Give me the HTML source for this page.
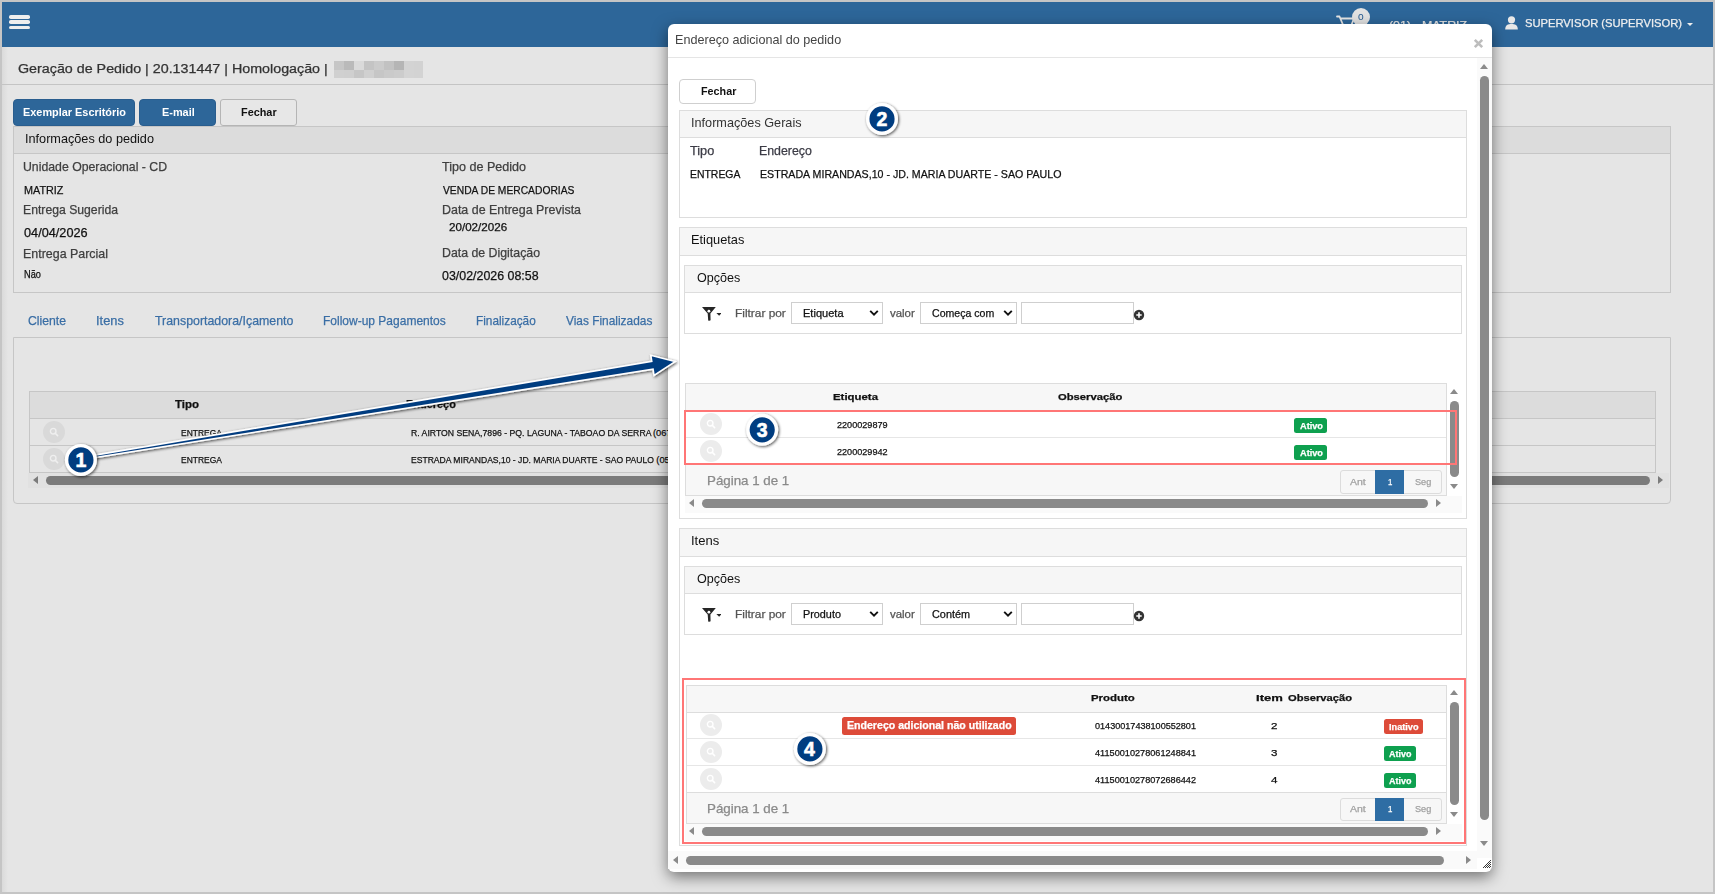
<!DOCTYPE html>
<html><head><meta charset="utf-8"><style>
html,body{margin:0;padding:0;width:1715px;height:894px;overflow:hidden;position:relative;font-family:"Liberation Sans", sans-serif;background:#e5e5e5}
</style></head><body>
<div style="position:absolute;left:0px;top:0px;width:1715px;height:894px;background:#c5c5c5"></div>
<div style="position:absolute;left:2px;top:2px;width:1711px;height:889.5px;background:#e5e5e5"></div>
<div style="position:absolute;left:2px;top:47px;width:6px;height:845px;background:linear-gradient(90deg,#dadada,#e5e5e5)"></div>
<div style="position:absolute;left:2px;top:2px;width:1711px;height:45px;background:#2d6699"></div>
<div style="position:absolute;left:9px;top:15px;width:21px;height:3.5px;background:#eee;border-radius:1.75px"></div>
<div style="position:absolute;left:9px;top:20.2px;width:21px;height:3.5px;background:#eee;border-radius:1.75px"></div>
<div style="position:absolute;left:9px;top:25.5px;width:21px;height:3.5px;background:#eee;border-radius:1.75px"></div>
<svg style="position:absolute;left:1330px;top:8px" width="30" height="20" viewBox="0 0 30 20"><path d="M7 8.5 H9.5 L13.5 18 H21 L24 10.5 H10.5" fill="none" stroke="#e6e6e6" stroke-width="1.8" stroke-linejoin="round" stroke-linecap="round"/></svg>
<div style="position:absolute;left:1352px;top:8px;width:18px;height:18px;background:#e2e2e2;border-radius:50%"></div>
<div id="t0" style="position:absolute;left:1358.4px;top:11px;font-size:9.6px;line-height:normal;font-weight:400;color:#23598f;white-space:pre;transform:scaleX(1.0590);transform-origin:0 0;">0</div>
<div id="t1" style="position:absolute;left:1389px;top:19px;font-size:11.3px;line-height:normal;font-weight:400;color:#e6e6e6;white-space:pre;transform:scaleX(1.0946);transform-origin:0 0;-webkit-text-stroke:0.25px currentColor;">(01) - MATRIZ</div>
<svg style="position:absolute;left:1504px;top:15px" width="16" height="16" viewBox="0 0 16 16"><circle cx="7.5" cy="4.8" r="3.6" fill="#e8e8e8"/><path d="M1.2 14.5 C1.2 10 4 9 7.5 9 C11 9 13.8 10 13.8 14.5 Z" fill="#e8e8e8"/></svg>
<div id="t2" style="position:absolute;left:1525.1px;top:17px;font-size:11.2px;line-height:normal;font-weight:400;color:#eeeeee;white-space:pre;transform:scaleX(1.0008);transform-origin:0 0;-webkit-text-stroke:0.25px currentColor;">SUPERVISOR (SUPERVISOR)</div>
<div style="position:absolute;left:1687px;top:23px;width:0;height:0;border-left:3px solid transparent;border-right:3px solid transparent;border-top:3px solid #eee"></div>
<div id="t3" style="position:absolute;left:18px;top:62px;font-size:12.5px;line-height:normal;font-weight:400;color:#333;white-space:pre;transform:scaleX(1.1428);transform-origin:0 0;-webkit-text-stroke:0.25px currentColor;">Geração de Pedido | 20.131447 | Homologação |</div>
<div style="position:absolute;left:334px;top:61px;width:10px;height:9px;background:#c6c6c6"></div>
<div style="position:absolute;left:344px;top:61px;width:10px;height:9px;background:#bababa"></div>
<div style="position:absolute;left:354px;top:61px;width:10px;height:9px;background:#dadada"></div>
<div style="position:absolute;left:364px;top:61px;width:10px;height:9px;background:#c4c4c4"></div>
<div style="position:absolute;left:374px;top:61px;width:10px;height:9px;background:#cbcbcb"></div>
<div style="position:absolute;left:384px;top:61px;width:10px;height:9px;background:#c2c2c2"></div>
<div style="position:absolute;left:394px;top:61px;width:10px;height:9px;background:#b5b5b5"></div>
<div style="position:absolute;left:404px;top:61px;width:10px;height:9px;background:#d3d3d3"></div>
<div style="position:absolute;left:414px;top:61px;width:9px;height:9px;background:#d2d2d2"></div>
<div style="position:absolute;left:334px;top:70px;width:10px;height:8px;background:#d0d0d0"></div>
<div style="position:absolute;left:344px;top:70px;width:10px;height:8px;background:#cfcfcf"></div>
<div style="position:absolute;left:354px;top:70px;width:10px;height:8px;background:#c6c6c6"></div>
<div style="position:absolute;left:364px;top:70px;width:10px;height:8px;background:#d0d0d0"></div>
<div style="position:absolute;left:374px;top:70px;width:10px;height:8px;background:#c6c6c6"></div>
<div style="position:absolute;left:384px;top:70px;width:10px;height:8px;background:#cacaca"></div>
<div style="position:absolute;left:394px;top:70px;width:10px;height:8px;background:#cccccc"></div>
<div style="position:absolute;left:404px;top:70px;width:10px;height:8px;background:#d4d4d4"></div>
<div style="position:absolute;left:414px;top:70px;width:9px;height:8px;background:#d3d3d3"></div>
<div style="position:absolute;left:2px;top:84px;width:1711px;height:1px;background:#c4c4c4"></div>
<div style="position:absolute;left:13px;top:99px;width:122px;height:27px;background:#2d6699;border:1px solid #295d8e;box-sizing:border-box;border-radius:4px"></div>
<div id="t4" style="position:absolute;left:23.3px;top:106px;font-size:11.5px;line-height:normal;font-weight:700;color:#fff;white-space:pre;transform:scaleX(0.9475);transform-origin:0 0;">Exemplar Escritório</div>
<div style="position:absolute;left:139px;top:99px;width:77px;height:27px;background:#2d6699;border:1px solid #295d8e;box-sizing:border-box;border-radius:4px"></div>
<div id="t5" style="position:absolute;left:161.7px;top:106px;font-size:11.5px;line-height:normal;font-weight:700;color:#fff;white-space:pre;transform:scaleX(0.9488);transform-origin:0 0;">E-mail</div>
<div style="position:absolute;left:220px;top:99px;width:77px;height:27px;background:#e7e7e7;border:1px solid #b5b5b5;border-radius:3px;box-sizing:border-box"></div>
<div id="t6" style="position:absolute;left:241px;top:106px;font-size:11.5px;line-height:normal;font-weight:700;color:#111;white-space:pre;transform:scaleX(0.9450);transform-origin:0 0;">Fechar</div>
<div style="position:absolute;left:13px;top:126px;width:1658px;height:167px;border:1px solid #c6c6c6;box-sizing:border-box"></div>
<div style="position:absolute;left:14px;top:127px;width:1656px;height:26px;background:#dcdcdc;border-bottom:1px solid #c6c6c6"></div>
<div id="t7" style="position:absolute;left:25px;top:131px;font-size:13px;line-height:normal;font-weight:400;color:#111;white-space:pre;transform:scaleX(0.9751);transform-origin:0 0;">Informações do pedido</div>
<div id="t8" style="position:absolute;left:23px;top:160px;font-size:12.2px;line-height:normal;font-weight:400;color:#3f3f3f;white-space:pre;transform:scaleX(1.0075);transform-origin:0 0;-webkit-text-stroke:0.25px currentColor;">Unidade Operacional - CD</div>
<div id="t9" style="position:absolute;left:23.7px;top:183px;font-size:11.7px;line-height:normal;font-weight:400;color:#111;white-space:pre;transform:scaleX(0.9246);transform-origin:0 0;-webkit-text-stroke:0.25px currentColor;">MATRIZ</div>
<div id="t10" style="position:absolute;left:23px;top:203px;font-size:12.2px;line-height:normal;font-weight:400;color:#3f3f3f;white-space:pre;transform:scaleX(1.0015);transform-origin:0 0;-webkit-text-stroke:0.25px currentColor;">Entrega Sugerida</div>
<div id="t11" style="position:absolute;left:24px;top:226px;font-size:12.5px;line-height:normal;font-weight:400;color:#111;white-space:pre;transform:scaleX(1.0169);transform-origin:0 0;-webkit-text-stroke:0.25px currentColor;">04/04/2026</div>
<div id="t12" style="position:absolute;left:23px;top:247px;font-size:12.2px;line-height:normal;font-weight:400;color:#3f3f3f;white-space:pre;transform:scaleX(1.0203);transform-origin:0 0;-webkit-text-stroke:0.25px currentColor;">Entrega Parcial</div>
<div id="t13" style="position:absolute;left:24px;top:269px;font-size:10.3px;line-height:normal;font-weight:400;color:#111;white-space:pre;transform:scaleX(0.8943);transform-origin:0 0;-webkit-text-stroke:0.25px currentColor;">Não</div>
<div id="t14" style="position:absolute;left:441.8px;top:160px;font-size:12.2px;line-height:normal;font-weight:400;color:#3f3f3f;white-space:pre;transform:scaleX(1.0305);transform-origin:0 0;-webkit-text-stroke:0.25px currentColor;">Tipo de Pedido</div>
<div id="t15" style="position:absolute;left:442.6px;top:183px;font-size:11.7px;line-height:normal;font-weight:400;color:#111;white-space:pre;transform:scaleX(0.8795);transform-origin:0 0;-webkit-text-stroke:0.25px currentColor;">VENDA DE MERCADORIAS</div>
<div id="t16" style="position:absolute;left:441.8px;top:203px;font-size:12.2px;line-height:normal;font-weight:400;color:#3f3f3f;white-space:pre;transform:scaleX(1.0209);transform-origin:0 0;-webkit-text-stroke:0.25px currentColor;">Data de Entrega Prevista</div>
<div id="t17" style="position:absolute;left:449px;top:221px;font-size:10.6px;line-height:normal;font-weight:400;color:#111;white-space:pre;transform:scaleX(1.0955);transform-origin:0 0;-webkit-text-stroke:0.25px currentColor;">20/02/2026</div>
<div id="t18" style="position:absolute;left:441.8px;top:246px;font-size:12.2px;line-height:normal;font-weight:400;color:#3f3f3f;white-space:pre;transform:scaleX(1.0116);transform-origin:0 0;-webkit-text-stroke:0.25px currentColor;">Data de Digitação</div>
<div id="t19" style="position:absolute;left:442.4px;top:268px;font-size:12.8px;line-height:normal;font-weight:400;color:#111;white-space:pre;transform:scaleX(0.9692);transform-origin:0 0;-webkit-text-stroke:0.25px currentColor;">03/02/2026 08:58</div>
<div id="t20" style="position:absolute;left:27.9px;top:314px;font-size:12.6px;line-height:normal;font-weight:400;color:#3a6ea5;white-space:pre;transform:scaleX(0.9711);transform-origin:0 0;-webkit-text-stroke:0.25px currentColor;">Cliente</div>
<div id="t21" style="position:absolute;left:96.2px;top:314px;font-size:12.6px;line-height:normal;font-weight:400;color:#3a6ea5;white-space:pre;transform:scaleX(1.0185);transform-origin:0 0;-webkit-text-stroke:0.25px currentColor;">Itens</div>
<div id="t22" style="position:absolute;left:154.6px;top:314px;font-size:12.6px;line-height:normal;font-weight:400;color:#3a6ea5;white-space:pre;transform:scaleX(0.9819);transform-origin:0 0;-webkit-text-stroke:0.25px currentColor;">Transportadora/Içamento</div>
<div id="t23" style="position:absolute;left:323.2px;top:314px;font-size:12.6px;line-height:normal;font-weight:400;color:#3a6ea5;white-space:pre;transform:scaleX(0.9530);transform-origin:0 0;-webkit-text-stroke:0.25px currentColor;">Follow-up Pagamentos</div>
<div id="t24" style="position:absolute;left:476.2px;top:314px;font-size:12.6px;line-height:normal;font-weight:400;color:#3a6ea5;white-space:pre;transform:scaleX(0.9378);transform-origin:0 0;-webkit-text-stroke:0.25px currentColor;">Finalização</div>
<div id="t25" style="position:absolute;left:566.1px;top:314px;font-size:12.6px;line-height:normal;font-weight:400;color:#3a6ea5;white-space:pre;transform:scaleX(0.9438);transform-origin:0 0;-webkit-text-stroke:0.25px currentColor;">Vias Finalizadas</div>
<div style="position:absolute;left:13px;top:337px;width:1658px;height:167px;border:1px solid #c6c6c6;box-sizing:border-box;border-radius:0 0 4px 4px"></div>
<div style="position:absolute;left:29px;top:391px;width:1627px;height:82px;border:1px solid #c6c6c6;box-sizing:border-box"></div>
<div style="position:absolute;left:30px;top:392px;width:1625px;height:26px;background:#dcdcdc;border-bottom:1px solid #c6c6c6"></div>
<div style="position:absolute;left:30px;top:445px;width:1625px;height:1px;background:#c6c6c6"></div>
<div id="t26" style="position:absolute;left:175px;top:399px;font-size:10.4px;line-height:normal;font-weight:700;color:#111;white-space:pre;transform:scaleX(1.1084);transform-origin:0 0;-webkit-text-stroke:0.25px currentColor;">Tipo</div>
<div id="t27" style="position:absolute;left:406px;top:399px;font-size:10.4px;line-height:normal;font-weight:700;color:#111;white-space:pre;transform:scaleX(1.0526);transform-origin:0 0;-webkit-text-stroke:0.25px currentColor;">Endereço</div>
<div style="position:absolute;left:43.3px;top:420.9px;width:22px;height:22px;background:#d9d9d9;border-radius:50%"></div>
<svg style="position:absolute;left:49.3px;top:426.9px" width="10" height="10" viewBox="0 0 10 10"><circle cx="4.2" cy="4.2" r="2.8" fill="none" stroke="#efefef" stroke-width="1.4"/><path d="M6.2 6.2 L8.6 8.6" stroke="#efefef" stroke-width="1.6" stroke-linecap="round"/></svg>
<div style="position:absolute;left:43.3px;top:447.9px;width:22px;height:22px;background:#d9d9d9;border-radius:50%"></div>
<svg style="position:absolute;left:49.3px;top:453.9px" width="10" height="10" viewBox="0 0 10 10"><circle cx="4.2" cy="4.2" r="2.8" fill="none" stroke="#efefef" stroke-width="1.4"/><path d="M6.2 6.2 L8.6 8.6" stroke="#efefef" stroke-width="1.6" stroke-linecap="round"/></svg>
<div id="t28" style="position:absolute;left:180.6px;top:428px;font-size:9.3px;line-height:normal;font-weight:400;color:#111;white-space:pre;transform:scaleX(0.9123);transform-origin:0 0;-webkit-text-stroke:0.25px currentColor;">ENTREGA</div>
<div id="t29" style="position:absolute;left:180.6px;top:455px;font-size:9.3px;line-height:normal;font-weight:400;color:#111;white-space:pre;transform:scaleX(0.9123);transform-origin:0 0;-webkit-text-stroke:0.25px currentColor;">ENTREGA</div>
<div id="t30" style="position:absolute;left:410.7px;top:428px;font-size:9.3px;line-height:normal;font-weight:400;color:#111;white-space:pre;transform:scaleX(0.9332);transform-origin:0 0;-webkit-text-stroke:0.25px currentColor;">R. AIRTON SENA,7896 - PQ. LAGUNA - TABOAO DA SERRA</div>
<div id="t31" style="position:absolute;left:653px;top:428px;font-size:9.3px;line-height:normal;font-weight:400;color:#111;white-space:pre;-webkit-text-stroke:0.25px currentColor;">(06781-000)</div>
<div id="t32" style="position:absolute;left:410.7px;top:455px;font-size:9.3px;line-height:normal;font-weight:400;color:#111;white-space:pre;transform:scaleX(0.9214);transform-origin:0 0;-webkit-text-stroke:0.25px currentColor;">ESTRADA MIRANDAS,10 - JD. MARIA DUARTE - SAO PAULO</div>
<div id="t33" style="position:absolute;left:656.3px;top:455px;font-size:9.3px;line-height:normal;font-weight:400;color:#111;white-space:pre;-webkit-text-stroke:0.25px currentColor;">(05000-000)</div>
<div style="position:absolute;left:28px;top:473px;width:1641px;height:15px;background:#e1e1e1"></div>
<div style="position:absolute;left:33px;top:476px;width:0;height:0;border-top:4.5px solid transparent;border-bottom:4.5px solid transparent;border-right:5px solid #7b7b7b"></div>
<div style="position:absolute;left:46px;top:476px;width:1604px;height:9px;background:#7b7b7b;border-radius:4.5px"></div>
<div style="position:absolute;left:1658px;top:476px;width:0;height:0;border-top:4.5px solid transparent;border-bottom:4.5px solid transparent;border-left:5px solid #7b7b7b"></div>
<div style="position:absolute;left:668px;top:24px;width:824px;height:848px;background:#fff;border-radius:6px;box-shadow:0 5px 15px rgba(0,0,0,.5)"></div>
<div id="t34" style="position:absolute;left:675.2px;top:32px;font-size:13.4px;line-height:normal;font-weight:400;color:#444;white-space:pre;transform:scaleX(0.9416);transform-origin:0 0;">Endereço adicional do pedido</div>
<svg style="position:absolute;left:1473px;top:38px" width="11" height="11" viewBox="0 0 11 11"><path d="M1.8 1.8 L9.2 9.2 M9.2 1.8 L1.8 9.2" stroke="#bdbdbd" stroke-width="2.6"/></svg>
<div style="position:absolute;left:668px;top:57px;width:824px;height:1px;background:#e5e5e5"></div>
<div style="position:absolute;left:1477px;top:58px;width:15px;height:800px;background:#fafafa"></div>
<div style="position:absolute;left:1480px;top:64px;width:0;height:0;border-left:4.5px solid transparent;border-right:4.5px solid transparent;border-bottom:5px solid #8a8a8a"></div>
<div style="position:absolute;left:1480px;top:76px;width:9px;height:744px;background:#8a8a8a;border-radius:4.5px"></div>
<div style="position:absolute;left:1480px;top:841px;width:0;height:0;border-left:4.5px solid transparent;border-right:4.5px solid transparent;border-top:5px solid #8a8a8a"></div>
<div style="position:absolute;left:668px;top:851px;width:809px;height:18px;background:#fafafa"></div>
<div style="position:absolute;left:673px;top:856px;width:0;height:0;border-top:4.5px solid transparent;border-bottom:4.5px solid transparent;border-right:5px solid #8a8a8a"></div>
<div style="position:absolute;left:686px;top:856px;width:758px;height:9px;background:#8a8a8a;border-radius:4.5px"></div>
<div style="position:absolute;left:1466px;top:856px;width:0;height:0;border-top:4.5px solid transparent;border-bottom:4.5px solid transparent;border-left:5px solid #8a8a8a"></div>
<svg style="position:absolute;left:1483px;top:860px" width="8" height="8" viewBox="0 0 8 8" fill="#3a3a3a"><rect x="0" y="7" width="1" height="1"/><rect x="1" y="6" width="1" height="1"/><rect x="2" y="5" width="1" height="1"/><rect x="2" y="7" width="1" height="1"/><rect x="3" y="4" width="1" height="1"/><rect x="3" y="6" width="1" height="1"/><rect x="4" y="3" width="1" height="1"/><rect x="4" y="5" width="1" height="1"/><rect x="4" y="7" width="1" height="1"/><rect x="5" y="2" width="1" height="1"/><rect x="5" y="4" width="1" height="1"/><rect x="5" y="6" width="1" height="1"/><rect x="6" y="1" width="1" height="1"/><rect x="6" y="3" width="1" height="1"/><rect x="6" y="5" width="1" height="1"/><rect x="6" y="7" width="1" height="1"/><rect x="7" y="0" width="1" height="1"/><rect x="7" y="2" width="1" height="1"/><rect x="7" y="4" width="1" height="1"/><rect x="7" y="6" width="1" height="1"/></svg>
<div style="position:absolute;left:679px;top:79px;width:77px;height:25px;border:1px solid #cfcfcf;border-radius:4px;background:#fff;box-sizing:border-box"></div>
<div id="t35" style="position:absolute;left:700.7px;top:85px;font-size:10.5px;line-height:normal;font-weight:700;color:#111;white-space:pre;transform:scaleX(1.0258);transform-origin:0 0;">Fechar</div>
<div style="position:absolute;left:679px;top:110px;width:788px;height:108px;border:1px solid #dddddd;box-sizing:border-box"></div>
<div style="position:absolute;left:680px;top:111px;width:786px;height:26px;background:#f6f6f6;border-bottom:1px solid #dddddd"></div>
<div id="t36" style="position:absolute;left:691px;top:115px;font-size:13px;line-height:normal;font-weight:400;color:#333;white-space:pre;transform:scaleX(0.9748);transform-origin:0 0;">Informações Gerais</div>
<div id="t37" style="position:absolute;left:689.8px;top:144px;font-size:12px;line-height:normal;font-weight:400;color:#3c3c46;white-space:pre;transform:scaleX(1.0591);transform-origin:0 0;-webkit-text-stroke:0.25px currentColor;">Tipo</div>
<div id="t38" style="position:absolute;left:758.9px;top:144px;font-size:12px;line-height:normal;font-weight:400;color:#3c3c46;white-space:pre;transform:scaleX(1.0303);transform-origin:0 0;-webkit-text-stroke:0.25px currentColor;">Endereço</div>
<div id="t39" style="position:absolute;left:690px;top:168px;font-size:11px;line-height:normal;font-weight:400;color:#111;white-space:pre;transform:scaleX(0.9485);transform-origin:0 0;-webkit-text-stroke:0.25px currentColor;">ENTREGA</div>
<div id="t40" style="position:absolute;left:759.5px;top:168px;font-size:11px;line-height:normal;font-weight:400;color:#111;white-space:pre;transform:scaleX(0.9664);transform-origin:0 0;-webkit-text-stroke:0.25px currentColor;">ESTRADA MIRANDAS,10 - JD. MARIA DUARTE - SAO PAULO</div>
<div style="position:absolute;left:679px;top:227px;width:788px;height:292px;border:1px solid #dddddd;box-sizing:border-box"></div>
<div style="position:absolute;left:680px;top:228px;width:786px;height:27px;background:#f6f6f6;border-bottom:1px solid #dddddd"></div>
<div id="t41" style="position:absolute;left:690.6px;top:232px;font-size:13px;line-height:normal;font-weight:400;color:#111;white-space:pre;transform:scaleX(0.9849);transform-origin:0 0;">Etiquetas</div>
<div style="position:absolute;left:684px;top:265px;width:778px;height:69px;border:1px solid #dddddd;box-sizing:border-box"></div>
<div style="position:absolute;left:685px;top:266px;width:776px;height:26px;background:#f6f6f6;border-bottom:1px solid #dddddd"></div>
<div id="t42" style="position:absolute;left:696.7px;top:271px;font-size:12.4px;line-height:normal;font-weight:400;color:#111;white-space:pre;transform:scaleX(1.0143);transform-origin:0 0;">Opções</div>
<svg style="position:absolute;left:701px;top:306px" width="20" height="16" viewBox="0 0 20 16"><path d="M1 1.1 H14.8 L9.4 7.6 L9.6 14.2 Q8.6 15 7.2 14.4 L6.7 7.6 Z" fill="#262626"/><circle cx="7.9" cy="5.2" r="1.4" fill="#fff"/><path d="M15.4 7 H20.8 L18.1 9.8 Z" fill="#262626"/></svg>
<div id="t43" style="position:absolute;left:735.3px;top:307px;font-size:10.6px;line-height:normal;font-weight:400;color:#555;white-space:pre;transform:scaleX(1.1212);transform-origin:0 0;-webkit-text-stroke:0.25px currentColor;">Filtrar por</div>
<div style="position:absolute;left:791px;top:302px;width:92px;height:22px;border:1px solid #cfcfcf;background:#fff;box-sizing:border-box"></div>
<div id="t44" style="position:absolute;left:802.6px;top:307px;font-size:10.5px;line-height:normal;font-weight:400;color:#111;white-space:pre;transform:scaleX(1.0525);transform-origin:0 0;-webkit-text-stroke:0.25px currentColor;">Etiqueta</div>
<svg style="position:absolute;left:869px;top:309px" width="10" height="8" viewBox="0 0 10 8"><path d="M1.2 1.8 L5 5.6 L8.8 1.8" fill="none" stroke="#111" stroke-width="1.9"/></svg>
<div id="t45" style="position:absolute;left:889.8px;top:307px;font-size:10.6px;line-height:normal;font-weight:400;color:#555;white-space:pre;transform:scaleX(1.0788);transform-origin:0 0;-webkit-text-stroke:0.25px currentColor;">valor</div>
<div style="position:absolute;left:920px;top:302px;width:97px;height:22px;border:1px solid #cfcfcf;background:#fff;box-sizing:border-box"></div>
<div id="t46" style="position:absolute;left:931.7px;top:307px;font-size:10.5px;line-height:normal;font-weight:400;color:#111;white-space:pre;transform:scaleX(1.0072);transform-origin:0 0;-webkit-text-stroke:0.25px currentColor;">Começa com</div>
<svg style="position:absolute;left:1003px;top:309px" width="10" height="8" viewBox="0 0 10 8"><path d="M1.2 1.8 L5 5.6 L8.8 1.8" fill="none" stroke="#111" stroke-width="1.9"/></svg>
<div style="position:absolute;left:1021px;top:302px;width:113px;height:22px;border:1px solid #cfcfcf;background:#fff;box-sizing:border-box"></div>
<svg style="position:absolute;left:1133px;top:309px" width="12" height="12" viewBox="0 0 12 12"><circle cx="6" cy="6" r="5.2" fill="#333"/><path d="M6 3.3 V8.7 M3.3 6 H8.7" stroke="#fff" stroke-width="1.6"/></svg>
<div style="position:absolute;left:685px;top:383px;width:762px;height:113px;border:1px solid #dddddd;box-sizing:border-box;background:#fff"></div>
<div style="position:absolute;left:686px;top:384px;width:760px;height:26px;background:#f7f7f7;border-bottom:1px solid #dddddd"></div>
<div id="t47" style="position:absolute;left:832.7px;top:391px;font-size:9.6px;line-height:normal;font-weight:700;color:#111;white-space:pre;transform:scaleX(1.1883);transform-origin:0 0;-webkit-text-stroke:0.25px currentColor;">Etiqueta</div>
<div id="t48" style="position:absolute;left:1057.7px;top:391px;font-size:9.6px;line-height:normal;font-weight:700;color:#111;white-space:pre;transform:scaleX(1.1699);transform-origin:0 0;-webkit-text-stroke:0.25px currentColor;">Observação</div>
<div style="position:absolute;left:686px;top:437px;width:760px;height:1px;background:#e6e6e6"></div>
<div style="position:absolute;left:686px;top:464px;width:760px;height:30px;background:#f7f7f7;border-top:1px solid #dddddd"></div>
<div style="position:absolute;left:699.8px;top:412.9px;width:22px;height:22px;background:#ececec;border-radius:50%"></div>
<svg style="position:absolute;left:705.8px;top:418.9px" width="10" height="10" viewBox="0 0 10 10"><circle cx="4.2" cy="4.2" r="2.8" fill="none" stroke="#fff" stroke-width="1.4"/><path d="M6.2 6.2 L8.6 8.6" stroke="#fff" stroke-width="1.6" stroke-linecap="round"/></svg>
<div style="position:absolute;left:699.8px;top:440px;width:22px;height:22px;background:#ececec;border-radius:50%"></div>
<svg style="position:absolute;left:705.8px;top:446px" width="10" height="10" viewBox="0 0 10 10"><circle cx="4.2" cy="4.2" r="2.8" fill="none" stroke="#fff" stroke-width="1.4"/><path d="M6.2 6.2 L8.6 8.6" stroke="#fff" stroke-width="1.6" stroke-linecap="round"/></svg>
<div id="t49" style="position:absolute;left:837.4px;top:420px;font-size:9.3px;line-height:normal;font-weight:400;color:#111;white-space:pre;transform:scaleX(0.9779);transform-origin:0 0;-webkit-text-stroke:0.25px currentColor;">2200029879</div>
<div id="t50" style="position:absolute;left:837.4px;top:447px;font-size:9.3px;line-height:normal;font-weight:400;color:#111;white-space:pre;transform:scaleX(0.9779);transform-origin:0 0;-webkit-text-stroke:0.25px currentColor;">2200029942</div>
<div style="position:absolute;left:1294px;top:418px;width:33px;height:15px;background:#0ea04f;border-radius:2.5px"></div>
<div id="t51" style="position:absolute;left:1299.5px;top:420px;font-size:9.4px;line-height:normal;font-weight:700;color:#fff;white-space:pre;transform:scaleX(0.9805);transform-origin:0 0;-webkit-text-stroke:0.25px currentColor;">Ativo</div>
<div style="position:absolute;left:1294px;top:445px;width:33px;height:15px;background:#0ea04f;border-radius:2.5px"></div>
<div id="t52" style="position:absolute;left:1299.5px;top:447px;font-size:9.4px;line-height:normal;font-weight:700;color:#fff;white-space:pre;transform:scaleX(0.9805);transform-origin:0 0;-webkit-text-stroke:0.25px currentColor;">Ativo</div>
<div id="t53" style="position:absolute;left:707.4px;top:474px;font-size:12.4px;line-height:normal;font-weight:400;color:#8a8a8a;white-space:pre;transform:scaleX(1.0757);transform-origin:0 0;-webkit-text-stroke:0.25px currentColor;">Página 1 de 1</div>
<div style="position:absolute;left:1339.5px;top:470.4px;width:102px;height:23.3px;border:1px solid #dcdcdc;border-radius:3px;background:#f7f7f7;box-sizing:border-box"></div>
<div style="position:absolute;left:1375px;top:470.4px;width:29px;height:23.3px;background:#2e6da4"></div>
<div id="t54" style="position:absolute;left:1350.4px;top:477px;font-size:9px;line-height:normal;font-weight:400;color:#a0a0a0;white-space:pre;transform:scaleX(1.1665);transform-origin:0 0;-webkit-text-stroke:0.25px currentColor;">Ant</div>
<div id="t55" style="position:absolute;left:1388px;top:477px;font-size:9px;line-height:normal;font-weight:400;color:#fff;white-space:pre;transform:scaleX(0.8716);transform-origin:0 0;-webkit-text-stroke:0.25px currentColor;">1</div>
<div id="t56" style="position:absolute;left:1414.8px;top:477px;font-size:9px;line-height:normal;font-weight:400;color:#a0a0a0;white-space:pre;transform:scaleX(1.0123);transform-origin:0 0;-webkit-text-stroke:0.25px currentColor;">Seg</div>
<div style="position:absolute;left:1450px;top:389px;width:0;height:0;border-left:4.5px solid transparent;border-right:4.5px solid transparent;border-bottom:5px solid #8a8a8a"></div>
<div style="position:absolute;left:1450px;top:401px;width:9px;height:76px;background:#8a8a8a;border-radius:4.5px"></div>
<div style="position:absolute;left:1450px;top:484px;width:0;height:0;border-left:4.5px solid transparent;border-right:4.5px solid transparent;border-top:5px solid #8a8a8a"></div>
<div style="position:absolute;left:685px;top:496px;width:777px;height:17px;background:#fafafa"></div>
<div style="position:absolute;left:689px;top:499px;width:0;height:0;border-top:4.5px solid transparent;border-bottom:4.5px solid transparent;border-right:5px solid #8a8a8a"></div>
<div style="position:absolute;left:702px;top:499px;width:725.5999999999999px;height:9px;background:#8a8a8a;border-radius:4.5px"></div>
<div style="position:absolute;left:1436px;top:499px;width:0;height:0;border-top:4.5px solid transparent;border-bottom:4.5px solid transparent;border-left:5px solid #8a8a8a"></div>
<div style="position:absolute;left:684px;top:410px;width:773px;height:55px;border:2px solid #ff7676;box-sizing:border-box"></div>
<div style="position:absolute;left:679px;top:528px;width:788px;height:318px;border:1px solid #dddddd;box-sizing:border-box"></div>
<div style="position:absolute;left:680px;top:529px;width:786px;height:27px;background:#f6f6f6;border-bottom:1px solid #dddddd"></div>
<div id="t57" style="position:absolute;left:690.6px;top:533px;font-size:13px;line-height:normal;font-weight:400;color:#111;white-space:pre;transform:scaleX(1.0005);transform-origin:0 0;">Itens</div>
<div style="position:absolute;left:684px;top:566px;width:778px;height:69px;border:1px solid #dddddd;box-sizing:border-box"></div>
<div style="position:absolute;left:685px;top:567px;width:776px;height:26px;background:#f6f6f6;border-bottom:1px solid #dddddd"></div>
<div id="t58" style="position:absolute;left:696.7px;top:572px;font-size:12.4px;line-height:normal;font-weight:400;color:#111;white-space:pre;transform:scaleX(1.0143);transform-origin:0 0;">Opções</div>
<svg style="position:absolute;left:701px;top:607px" width="20" height="16" viewBox="0 0 20 16"><path d="M1 1.1 H14.8 L9.4 7.6 L9.6 14.2 Q8.6 15 7.2 14.4 L6.7 7.6 Z" fill="#262626"/><circle cx="7.9" cy="5.2" r="1.4" fill="#fff"/><path d="M15.4 7 H20.8 L18.1 9.8 Z" fill="#262626"/></svg>
<div id="t59" style="position:absolute;left:735.3px;top:608px;font-size:10.6px;line-height:normal;font-weight:400;color:#555;white-space:pre;transform:scaleX(1.1212);transform-origin:0 0;-webkit-text-stroke:0.25px currentColor;">Filtrar por</div>
<div style="position:absolute;left:791px;top:603px;width:92px;height:22px;border:1px solid #cfcfcf;background:#fff;box-sizing:border-box"></div>
<div id="t60" style="position:absolute;left:802.6px;top:608px;font-size:10.5px;line-height:normal;font-weight:400;color:#111;white-space:pre;transform:scaleX(1.0313);transform-origin:0 0;-webkit-text-stroke:0.25px currentColor;">Produto</div>
<svg style="position:absolute;left:869px;top:610px" width="10" height="8" viewBox="0 0 10 8"><path d="M1.2 1.8 L5 5.6 L8.8 1.8" fill="none" stroke="#111" stroke-width="1.9"/></svg>
<div id="t61" style="position:absolute;left:889.8px;top:608px;font-size:10.6px;line-height:normal;font-weight:400;color:#555;white-space:pre;transform:scaleX(1.0788);transform-origin:0 0;-webkit-text-stroke:0.25px currentColor;">valor</div>
<div style="position:absolute;left:920px;top:603px;width:97px;height:22px;border:1px solid #cfcfcf;background:#fff;box-sizing:border-box"></div>
<div id="t62" style="position:absolute;left:931.7px;top:608px;font-size:10.5px;line-height:normal;font-weight:400;color:#111;white-space:pre;transform:scaleX(1.0345);transform-origin:0 0;-webkit-text-stroke:0.25px currentColor;">Contém</div>
<svg style="position:absolute;left:1003px;top:610px" width="10" height="8" viewBox="0 0 10 8"><path d="M1.2 1.8 L5 5.6 L8.8 1.8" fill="none" stroke="#111" stroke-width="1.9"/></svg>
<div style="position:absolute;left:1021px;top:603px;width:113px;height:22px;border:1px solid #cfcfcf;background:#fff;box-sizing:border-box"></div>
<svg style="position:absolute;left:1133px;top:610px" width="12" height="12" viewBox="0 0 12 12"><circle cx="6" cy="6" r="5.2" fill="#333"/><path d="M6 3.3 V8.7 M3.3 6 H8.7" stroke="#fff" stroke-width="1.6"/></svg>
<div style="position:absolute;left:685.7px;top:684.5px;width:761px;height:139px;border:1px solid #dddddd;box-sizing:border-box;background:#fff"></div>
<div style="position:absolute;left:686.7px;top:685.5px;width:759px;height:26px;background:#f7f7f7;border-bottom:1px solid #dddddd"></div>
<div id="t63" style="position:absolute;left:1090.5px;top:692px;font-size:9.6px;line-height:normal;font-weight:700;color:#111;white-space:pre;transform:scaleX(1.1878);transform-origin:0 0;-webkit-text-stroke:0.25px currentColor;">Produto</div>
<div id="t64" style="position:absolute;left:1255.8px;top:692px;font-size:9.6px;line-height:normal;font-weight:700;color:#111;white-space:pre;transform:scaleX(1.3611);transform-origin:0 0;-webkit-text-stroke:0.25px currentColor;">Item</div>
<div id="t65" style="position:absolute;left:1288.2px;top:692px;font-size:9.6px;line-height:normal;font-weight:700;color:#111;white-space:pre;transform:scaleX(1.1643);transform-origin:0 0;-webkit-text-stroke:0.25px currentColor;">Observação</div>
<div style="position:absolute;left:686.7px;top:738px;width:759px;height:1px;background:#e6e6e6"></div>
<div style="position:absolute;left:686.7px;top:765px;width:759px;height:1px;background:#e6e6e6"></div>
<div style="position:absolute;left:686.7px;top:792px;width:759px;height:30px;background:#f7f7f7;border-top:1px solid #dddddd"></div>
<div style="position:absolute;left:699.8px;top:713.8px;width:22px;height:22px;background:#ececec;border-radius:50%"></div>
<svg style="position:absolute;left:705.8px;top:719.8px" width="10" height="10" viewBox="0 0 10 10"><circle cx="4.2" cy="4.2" r="2.8" fill="none" stroke="#fff" stroke-width="1.4"/><path d="M6.2 6.2 L8.6 8.6" stroke="#fff" stroke-width="1.6" stroke-linecap="round"/></svg>
<div style="position:absolute;left:699.8px;top:740.8px;width:22px;height:22px;background:#ececec;border-radius:50%"></div>
<svg style="position:absolute;left:705.8px;top:746.8px" width="10" height="10" viewBox="0 0 10 10"><circle cx="4.2" cy="4.2" r="2.8" fill="none" stroke="#fff" stroke-width="1.4"/><path d="M6.2 6.2 L8.6 8.6" stroke="#fff" stroke-width="1.6" stroke-linecap="round"/></svg>
<div style="position:absolute;left:699.8px;top:767.8px;width:22px;height:22px;background:#ececec;border-radius:50%"></div>
<svg style="position:absolute;left:705.8px;top:773.8px" width="10" height="10" viewBox="0 0 10 10"><circle cx="4.2" cy="4.2" r="2.8" fill="none" stroke="#fff" stroke-width="1.4"/><path d="M6.2 6.2 L8.6 8.6" stroke="#fff" stroke-width="1.6" stroke-linecap="round"/></svg>
<div style="position:absolute;left:842px;top:717px;width:174px;height:18px;background:#dd4b39;border-radius:2.5px"></div>
<div id="t66" style="position:absolute;left:847.2px;top:720px;font-size:10px;line-height:normal;font-weight:700;color:#fff;white-space:pre;transform:scaleX(1.0583);transform-origin:0 0;-webkit-text-stroke:0.25px currentColor;">Endereço adicional não utilizado</div>
<div id="t67" style="position:absolute;left:1095.4px;top:721px;font-size:9.3px;line-height:normal;font-weight:400;color:#111;white-space:pre;transform:scaleX(0.9764);transform-origin:0 0;-webkit-text-stroke:0.25px currentColor;">01430017438100552801</div>
<div id="t68" style="position:absolute;left:1095.4px;top:748px;font-size:9.3px;line-height:normal;font-weight:400;color:#111;white-space:pre;transform:scaleX(0.9830);transform-origin:0 0;-webkit-text-stroke:0.25px currentColor;">41150010278061248841</div>
<div id="t69" style="position:absolute;left:1095.4px;top:775px;font-size:9.3px;line-height:normal;font-weight:400;color:#111;white-space:pre;transform:scaleX(0.9830);transform-origin:0 0;-webkit-text-stroke:0.25px currentColor;">41150010278072686442</div>
<div id="t70" style="position:absolute;left:1270.6px;top:721px;font-size:9.3px;line-height:normal;font-weight:400;color:#111;white-space:pre;transform:scaleX(1.2464);transform-origin:0 0;-webkit-text-stroke:0.25px currentColor;">2</div>
<div id="t71" style="position:absolute;left:1270.6px;top:748px;font-size:9.3px;line-height:normal;font-weight:400;color:#111;white-space:pre;transform:scaleX(1.2464);transform-origin:0 0;-webkit-text-stroke:0.25px currentColor;">3</div>
<div id="t72" style="position:absolute;left:1270.6px;top:775px;font-size:9.3px;line-height:normal;font-weight:400;color:#111;white-space:pre;transform:scaleX(1.2464);transform-origin:0 0;-webkit-text-stroke:0.25px currentColor;">4</div>
<div style="position:absolute;left:1384px;top:719px;width:39px;height:15px;background:#dd4b39;border-radius:2.5px"></div>
<div id="t73" style="position:absolute;left:1388.9px;top:721px;font-size:9.4px;line-height:normal;font-weight:700;color:#fff;white-space:pre;transform:scaleX(0.9788);transform-origin:0 0;-webkit-text-stroke:0.25px currentColor;">Inativo</div>
<div style="position:absolute;left:1384px;top:746px;width:32px;height:15px;background:#0ea04f;border-radius:2.5px"></div>
<div id="t74" style="position:absolute;left:1389.3px;top:748px;font-size:9.4px;line-height:normal;font-weight:700;color:#fff;white-space:pre;transform:scaleX(0.9582);transform-origin:0 0;-webkit-text-stroke:0.25px currentColor;">Ativo</div>
<div style="position:absolute;left:1384px;top:773px;width:32px;height:15px;background:#0ea04f;border-radius:2.5px"></div>
<div id="t75" style="position:absolute;left:1389.3px;top:775px;font-size:9.4px;line-height:normal;font-weight:700;color:#fff;white-space:pre;transform:scaleX(0.9582);transform-origin:0 0;-webkit-text-stroke:0.25px currentColor;">Ativo</div>
<div id="t76" style="position:absolute;left:707.2px;top:802px;font-size:12.4px;line-height:normal;font-weight:400;color:#8a8a8a;white-space:pre;transform:scaleX(1.0757);transform-origin:0 0;-webkit-text-stroke:0.25px currentColor;">Página 1 de 1</div>
<div style="position:absolute;left:1339.5px;top:798.2px;width:102px;height:23.3px;border:1px solid #dcdcdc;border-radius:3px;background:#f7f7f7;box-sizing:border-box"></div>
<div style="position:absolute;left:1375px;top:798.2px;width:29px;height:23.3px;background:#2e6da4"></div>
<div id="t77" style="position:absolute;left:1350.4px;top:804px;font-size:9px;line-height:normal;font-weight:400;color:#a0a0a0;white-space:pre;transform:scaleX(1.1665);transform-origin:0 0;-webkit-text-stroke:0.25px currentColor;">Ant</div>
<div id="t78" style="position:absolute;left:1388px;top:804px;font-size:9px;line-height:normal;font-weight:400;color:#fff;white-space:pre;transform:scaleX(0.8716);transform-origin:0 0;-webkit-text-stroke:0.25px currentColor;">1</div>
<div id="t79" style="position:absolute;left:1414.8px;top:804px;font-size:9px;line-height:normal;font-weight:400;color:#a0a0a0;white-space:pre;transform:scaleX(1.0123);transform-origin:0 0;-webkit-text-stroke:0.25px currentColor;">Seg</div>
<div style="position:absolute;left:1450px;top:690px;width:0;height:0;border-left:4.5px solid transparent;border-right:4.5px solid transparent;border-bottom:5px solid #8a8a8a"></div>
<div style="position:absolute;left:1450px;top:702.4px;width:9px;height:102.60000000000002px;background:#8a8a8a;border-radius:4.5px"></div>
<div style="position:absolute;left:1450px;top:812px;width:0;height:0;border-left:4.5px solid transparent;border-right:4.5px solid transparent;border-top:5px solid #8a8a8a"></div>
<div style="position:absolute;left:685px;top:824px;width:777px;height:17px;background:#fafafa"></div>
<div style="position:absolute;left:689px;top:827px;width:0;height:0;border-top:4.5px solid transparent;border-bottom:4.5px solid transparent;border-right:5px solid #8a8a8a"></div>
<div style="position:absolute;left:702px;top:827px;width:725.9000000000001px;height:9px;background:#8a8a8a;border-radius:4.5px"></div>
<div style="position:absolute;left:1436px;top:827px;width:0;height:0;border-top:4.5px solid transparent;border-bottom:4.5px solid transparent;border-left:5px solid #8a8a8a"></div>
<div style="position:absolute;left:682px;top:678px;width:784px;height:166px;border:2px solid #ff7676;box-sizing:border-box"></div>
<svg style="position:absolute;left:0;top:0" width="1715" height="894" viewBox="0 0 1715 894">
<defs><filter id="sh" x="-50%" y="-50%" width="200%" height="200%"><feGaussianBlur in="SourceAlpha" stdDeviation="1.4"/><feOffset dx="0.8" dy="1.4" result="b"/><feComponentTransfer><feFuncA type="linear" slope="0.7"/></feComponentTransfer><feMerge><feMergeNode/><feMergeNode in="SourceGraphic"/></feMerge></filter></defs>
<polygon points="94.81,455.12 651.76,361.36 650.76,355.24 675.10,361.60 654.04,375.37 653.04,369.25 95.19,457.48" fill="#063d80" stroke="#fff" stroke-width="1.6" stroke-linejoin="miter" filter="url(#sh)"/>
<circle cx="80.9" cy="459.9" r="14.3" fill="#063d80" stroke="#fff" stroke-width="3.4" filter="url(#sh)"/><circle cx="882" cy="118.9" r="14.3" fill="#063d80" stroke="#fff" stroke-width="3.4" filter="url(#sh)"/><circle cx="762.2" cy="429.8" r="14.3" fill="#063d80" stroke="#fff" stroke-width="3.4" filter="url(#sh)"/><circle cx="809.9" cy="748.9" r="14.3" fill="#063d80" stroke="#fff" stroke-width="3.4" filter="url(#sh)"/>
</svg>
<div id="t80" style="position:absolute;left:75.5px;top:449px;font-size:19.5px;line-height:normal;font-weight:700;color:#fff;white-space:pre;-webkit-text-stroke:0.6px #fff;">1</div>
<div id="t81" style="position:absolute;left:876.5px;top:108px;font-size:19.5px;line-height:normal;font-weight:700;color:#fff;white-space:pre;-webkit-text-stroke:0.6px #fff;">2</div>
<div id="t82" style="position:absolute;left:756.7px;top:419px;font-size:19.5px;line-height:normal;font-weight:700;color:#fff;white-space:pre;-webkit-text-stroke:0.6px #fff;">3</div>
<div id="t83" style="position:absolute;left:804.1px;top:738px;font-size:19.5px;line-height:normal;font-weight:700;color:#fff;white-space:pre;-webkit-text-stroke:0.6px #fff;">4</div>
</body></html>
